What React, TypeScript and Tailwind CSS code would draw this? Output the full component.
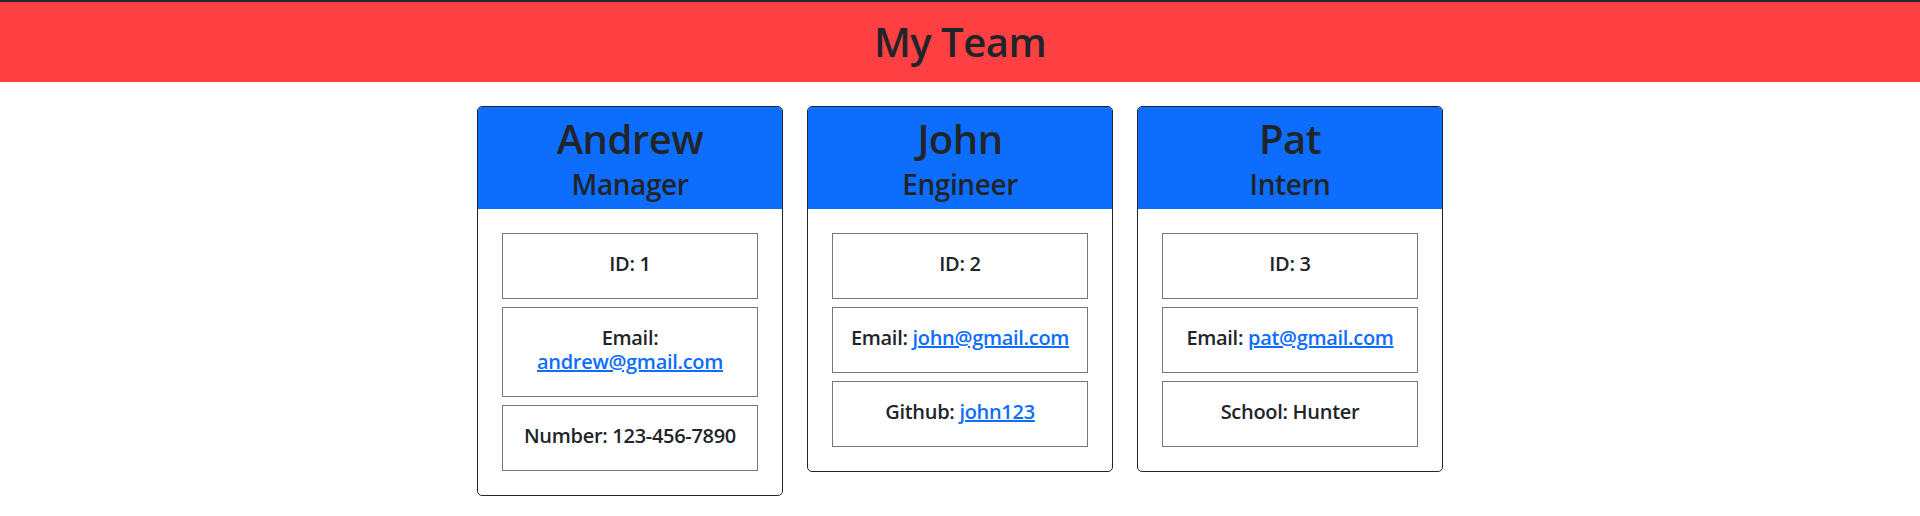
const team = [
  {
    name: 'Andrew',
    role: 'Manager',
    id: 1,
    email: 'andrew@gmail.com',
    extra: { label: 'Number', value: '123-456-7890' },
  },
  {
    name: 'John',
    role: 'Engineer',
    id: 2,
    email: 'john@gmail.com',
    extra: { label: 'Github', value: 'john123', link: true },
  },
  {
    name: 'Pat',
    role: 'Intern',
    id: 3,
    email: 'pat@gmail.com',
    extra: { label: 'School', value: 'Hunter' },
  },
];

type Member = (typeof team)[number];

function InfoBox({ children }: { children: React.ReactNode }) {
  return (
    <div className="border border-[#7a7a7a] px-3 pt-[18px] pb-[22px] text-center text-[20px] leading-[24px] font-semibold tracking-[-0.3px]">
      {children}
    </div>
  );
}

function MemberCard({ member }: { member: Member }) {
  const extra = member.extra as { label: string; value: string; link?: boolean };
  return (
    <div className="w-[306px] overflow-hidden rounded-[5px] border border-[#212529] bg-white">
      <div className="bg-[#0d6efd] pt-[10px] pb-[10px] text-center">
        <h2 className="text-[40px] leading-[44px] font-semibold tracking-[-0.5px]">{member.name}</h2>
        <h3 className="mt-[8px] text-[28px] leading-[30px] font-semibold tracking-[-0.4px]">{member.role}</h3>
      </div>
      <div className="flex flex-col gap-2 p-6">
        <InfoBox>ID: {member.id}</InfoBox>
        <InfoBox>
          Email:{' '}
          <a href={`mailto:${member.email}`} className="text-[#0d6efd] underline">
            {member.email}
          </a>
        </InfoBox>
        <InfoBox>
          {extra.label}:{' '}
          {extra.link ? (
            <a href="#" className="text-[#0d6efd] underline">
              {extra.value}
            </a>
          ) : (
            extra.value
          )}
        </InfoBox>
      </div>
    </div>
  );
}

export default function App() {
  return (
    <div className="min-h-[516px] bg-white text-[#212529] font-['Open_Sans',sans-serif]">
      <div className="h-[2px] bg-[#262637]" />
      <header className="flex h-[80px] items-center justify-center bg-[#ff4043]">
        <h1 className="text-[40px] leading-[48px] font-semibold tracking-[-0.5px]">My Team</h1>
      </header>
      <main className="mt-6 flex items-start justify-center gap-6">
        {team.map((member) => (
          <MemberCard key={member.id} member={member} />
        ))}
      </main>
    </div>
  );
}
